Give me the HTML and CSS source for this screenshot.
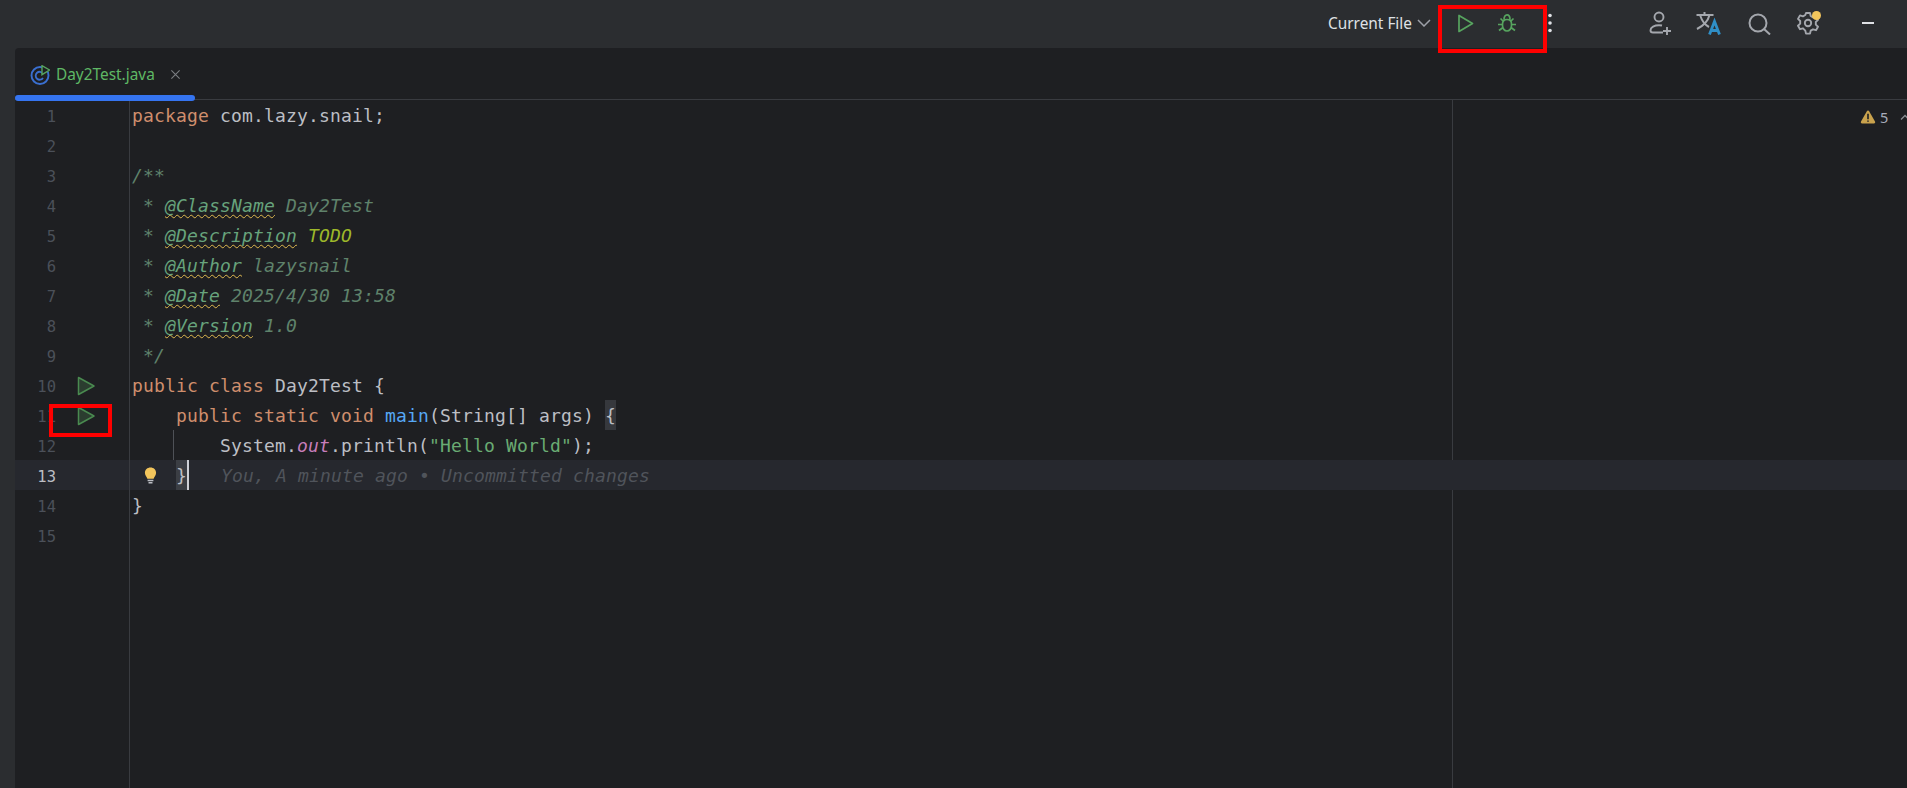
FILE: index.html
```html
<!DOCTYPE html>
<html lang="en">
<head>
<meta charset="utf-8">
<title>Day2Test.java</title>
<link rel="stylesheet" href="styles.css">
</head>
<body>
<div class="app">
  <header class="titlebar">
    <span class="config">Current File</span>
    <svg class="ic chev" viewBox="0 0 14 8"><path d="M1 1 7 7 13 1"/></svg>
    <svg class="ic tb-play" viewBox="0 0 20 20"><path d="M3 2.500v16L16.500 10.500z"/></svg>
    <svg class="ic tb-bug" viewBox="0 0 20 20"><path d="M5.500 11c0-3 2-4.500 4.500-4.500s4.500 1.500 4.500 4.500v1.500c0 3-2 5.500-4.500 5.500s-4.500-2.500-4.500-5.500zM6 8 3.500 5.500M14 8l2.500-2.500M7 6.500C7 3.500 8.500 1.800 10 1.800s3 1.700 3 4.700M1 11.500h4.500M14.500 11.500H19M2 17.500l4-3M18 17.500l-4-3"/></svg>
    <svg class="ic tb-more" viewBox="0 0 20 20"><circle cx="10" cy="2.500" r="1.800"/><circle cx="10" cy="10" r="1.800"/><circle cx="10" cy="17.500" r="1.800"/></svg>
    <svg class="ic tb-user" viewBox="0 0 24 24"><circle cx="11" cy="6" r="4.500"/><path d="M15 21.500H5c-1.500 0-2.500-1-2.500-2.300 0-3 4-5 8.500-5 1 0 2 .1 3 .3M15 20h8M19 16v8"/></svg>
    <svg class="ic tb-trans" viewBox="0 0 26 24"><path class="g" d="M.5 4h17M8.500 1v3M13.500 4C12 10 7 15 1 18M4 4c2 6 5 10 9 12"/><path class="b" d="M13.500 23.500l5-13 5 13M15.500 19.500h6"/></svg>
    <svg class="ic tb-search" viewBox="0 0 24 24"><circle cx="11" cy="12" r="8.500"/><path d="M17 18l6 5.500"/></svg>
    <span class="gear">
      <svg class="ic tb-gear" viewBox="0 0 24 24"><path d="M9 2h4l.7 3 2.300 1.300 3-.9 2 3.500-2.200 2.100v2.600l2.200 2.100-2 3.500-3-.9-2.300 1.300-.7 3H9l-.7-3L6 17.300l-3 .9-2-3.500 2.200-2.100v-2.600L1 7.900l2-3.500 3 .9 2.300-1.300z"/><circle cx="11" cy="12" r="3.200"/></svg>
      <i class="dot"></i>
    </span>
    <i class="minimize"></i>
  </header>

  <div class="main">
    <div class="strip"></div>
    <div class="pane">
      <div class="tabs">
        <div class="tab">
          <svg class="file-ic" viewBox="0 0 20 20"><circle class="ring" cx="10" cy="10.500" r="8.500"/><path class="c" d="M13 8.500a4 4 0 1 0 0 4.500"/><path class="tri" d="M12 .7v9L19.500 5z"/></svg>
          <span class="tab-name">Day2Test.java</span>
          <svg class="close" viewBox="0 0 12 12"><path d="M1.500 1.500l9 9M10.500 1.500l-9 9"/></svg>
        </div>
      </div>

      <div class="editor">
        <div class="gutter">
          <div class="g-row"><span class="num">1</span></div>
          <div class="g-row"><span class="num">2</span></div>
          <div class="g-row"><span class="num">3</span></div>
          <div class="g-row"><span class="num">4</span></div>
          <div class="g-row"><span class="num">5</span></div>
          <div class="g-row"><span class="num">6</span></div>
          <div class="g-row"><span class="num">7</span></div>
          <div class="g-row"><span class="num">8</span></div>
          <div class="g-row"><span class="num">9</span></div>
          <div class="g-row"><span class="num">10</span><svg class="g-play" viewBox="0 0 20 20"><path d="M2.500 1.500v17L18 10z"/></svg></div>
          <div class="g-row"><span class="num">11</span><svg class="g-play" viewBox="0 0 20 20"><path d="M2.500 1.500v17L18 10z"/></svg></div>
          <div class="g-row"><span class="num">12</span></div>
          <div class="g-row cur"><span class="num">13</span></div>
          <div class="g-row"><span class="num">14</span></div>
          <div class="g-row"><span class="num">15</span></div>
        </div>

        <div class="code">
          <div class="guide"></div>
          <div class="line"><span class="kw">package</span> com.lazy.snail;</div>
          <div class="line"></div>
          <div class="line"><span class="doc">/**</span></div>
          <div class="line"><span class="doc"> * <span class="tag">@ClassName</span> Day2Test</span></div>
          <div class="line"><span class="doc"> * <span class="tag">@Description</span> <span class="todo">TODO</span></span></div>
          <div class="line"><span class="doc"> * <span class="tag">@Author</span> lazysnail</span></div>
          <div class="line"><span class="doc"> * <span class="tag">@Date</span> 2025/4/30 13:58</span></div>
          <div class="line"><span class="doc"> * <span class="tag">@Version</span> 1.0</span></div>
          <div class="line"><span class="doc"> */</span></div>
          <div class="line"><span class="kw">public class</span> Day2Test {</div>
          <div class="line">    <span class="kw">public static void</span> <span class="fn">main</span>(String[] args) <span class="match">{</span></div>
          <div class="line"><i class="indent"></i>        System.<span class="field">out</span>.println(<span class="str">"Hello World"</span>);</div>
          <div class="line cur"><svg class="bulb" viewBox="0 0 14 20"><path class="bulb-top" d="M7 .5C3.400.5.800 3 .800 6.300c0 3 2 4.300 2.700 6.700h7c.7-2.400 2.700-3.700 2.700-6.700C13.200 3 10.600.5 7 .5z"/><path class="bulb-base" d="M3.800 15h6.400M4.800 17.500h4.400"/></svg>    <span class="match">}</span><i class="caret"></i>   <span class="hint">You, A minute ago • Uncommitted changes</span></div>
          <div class="line">}</div>
          <div class="line"></div>
          <div class="inspect">
            <svg class="warn" viewBox="0 0 14 13"><path d="M7 .5c.5 0 .9.300 1.200.8l5.300 9.400c.5.900 0 1.800-1 1.800h-11c-1 0-1.500-.9-1-1.800L5.800 1.300C6.100.8 6.500.5 7 .5z"/><path class="mark" d="M7 3.500v5M7 9.800v1.200"/></svg>
            <span class="count">5</span>
            <svg class="up" viewBox="0 0 10 6"><path d="M1 5.500 5 1.500 9 5.500"/></svg>
          </div>
        </div>
      </div>
    </div>
  </div>

  <div class="mark-run"></div>
  <div class="mark-gutter"></div>
</div>
</body>
</html>
```
FILE: styles.css
```css
* { box-sizing: border-box; }
html, body { margin: 0; height: 100%; overflow: hidden; background: #1e1f22; }
.app { position: relative; display: flex; flex-direction: column; height: 100vh; overflow: hidden; }

.titlebar {
  display: flex; align-items: center; justify-content: flex-end;
  height: 48px; flex: none; padding: 0 33px 2px 0;
  background: #2b2d30;
}
.config { padding-top: 2px; font: 15.400px/20px "Noto Sans", sans-serif; color: #dfe1e5; }
.ic { flex: none; fill: none; stroke-width: 1.500; }
.chev { width: 14px; height: 8px; margin-left: 5px; stroke: #9da0a8; stroke-width: 1.500; }
.tb-play { width: 20px; height: 20px; margin-left: 25px; stroke: #57a45f; stroke-width: 1.700; stroke-linejoin: round; }
.tb-bug { width: 20px; height: 20px; margin-left: 21px; stroke: #57a45f; stroke-width: 1.700; }
.tb-more { width: 20px; height: 20px; margin-left: 23px; fill: #dfe1e5; stroke: none; }
.tb-user { width: 24px; height: 24px; margin-left: 88px; stroke: #a4a7ad; stroke-width: 1.900; }
.tb-trans { width: 26px; height: 24px; margin-left: 24px; stroke-width: 2; }
.tb-trans .g { stroke: #a4a7ad; }
.tb-trans .b { stroke: #2f8fc7; stroke-width: 2.800; }
.tb-search { width: 24px; height: 24px; margin-left: 25px; stroke: #a4a7ad; stroke-width: 2; }
.gear { position: relative; display: flex; margin-left: 26px; }
.tb-gear { width: 24px; height: 24px; stroke: #a4a7ad; stroke-width: 1.900; stroke-linejoin: round; }
.dot { position: absolute; top: 0; right: 0; width: 9px; height: 9px; border-radius: 50%; background: #f2c55c; }
.minimize { flex: none; width: 12px; height: 2px; margin-left: 41px; background: #dfe1e5; }

.main { display: flex; flex: 1; min-height: 0; background: #2b2d30; }
.strip { width: 15px; flex: none; }
.pane { flex: 1; min-width: 0; display: flex; flex-direction: column; background: #1e1f22; border-top-left-radius: 4px; }

.tabs { height: 52px; flex: none; border-bottom: 1px solid #393b40; }
.tab {
  position: relative; display: flex; align-items: center;
  width: 180px; height: 52px; padding: 1px 0 0 15px;
}
.tab::after {
  content: ""; position: absolute; left: 0; right: 0; bottom: -1px; height: 6px;
  border-radius: 3px; background: #3574f0;
}
.file-ic { width: 20px; height: 20px; flex: none; fill: none; }
.ring { stroke: #3a6fd0; stroke-width: 1.900; }
.c { stroke: #3a6fd0; stroke-width: 1.800; }
.tri { fill: #1e1f22; stroke: #57a45f; stroke-width: 1.400; }
.tab-name { margin-left: 6px; font: 15.400px/20px "Noto Sans", sans-serif; color: #5fb865; }
.close { width: 11px; height: 11px; margin-left: 15px; flex: none; fill: none; stroke: #7a7d82; stroke-width: 1.200; }

.editor {
  flex: 1; min-height: 0; display: flex;
  font: 18px/32px "DejaVu Sans Mono", monospace; letter-spacing: .16px; color: #bcbec4;
}
.gutter { width: 115px; flex: none; border-right: 1px solid #393b40; }
.g-row { position: relative; display: flex; align-items: center; height: 30px; padding-top: 4px; }
.num {
  width: 41px; text-align: right; letter-spacing: 0;
  font-size: 15.500px; line-height: 20px; color: #4b5059;
}
.g-row.cur { background: #26282e; }
.g-row.cur .num { color: #bcbec4; }
.g-play { width: 20px; height: 20px; margin: -2px 0 0 20px; fill: #2b3d2f; stroke: #4a8a50; stroke-width: 1.500; stroke-linejoin: round; }

.code { position: relative; flex: 1; min-width: 0; }
.guide { position: absolute; top: 0; bottom: 0; left: 1322px; width: 1px; background: #393b40; }
.line { position: relative; height: 30px; padding-left: 2px; white-space: pre; }
.line.cur { background: #26282e; }
.bulb { position: absolute; left: 14px; top: 7px; width: 13px; height: 18px; fill: none; }
.bulb-top { fill: #f2c55c; }
.bulb-base { stroke: #bcbec4; stroke-width: 1.500; }
.kw { color: #cf8e6d; }
.doc { color: #5f826b; font-style: italic; }
.tag { color: #67a37c; text-decoration: underline wavy #e0b84f 1px; text-underline-offset: 2px; text-decoration-skip-ink: none; }
.todo { color: #9db82a; }
.fn { color: #56a8f5; }
.field { color: #c77dbb; font-style: italic; }
.str { color: #6aab73; }
.match { display: inline-block; height: 30px; background: #3b3e44; vertical-align: top; }
.line:not(.cur) .match { background: #36383d; }
.hint { margin-left: 1px; color: #50545b; font-style: italic; }
.caret { display: inline-block; width: 2px; height: 30px; margin-right: -2px; background: #ced0d6; vertical-align: top; }
.indent { position: absolute; left: 43px; top: 0; bottom: 0; width: 1px; background: #4e5157; }

.inspect { position: absolute; top: 7px; left: 1730px; display: flex; align-items: center; height: 20px; font: 14.500px/20px "Noto Sans", sans-serif; color: #a8adbd; }
.warn { width: 16px; height: 14px; fill: #c9a24d; }
.mark { stroke: #1e1f22; stroke-width: 1.500; fill: none; }
.count { margin-left: 4px; }
.up { width: 10px; height: 6px; margin-left: 12px; fill: none; stroke: #8a8d93; stroke-width: 1.300; }

.mark-run, .mark-gutter { position: absolute; border: 4px solid #ff0000; }
.mark-run { left: 1438px; top: 5px; width: 109px; height: 48px; }
.mark-gutter { left: 49px; top: 404px; width: 63px; height: 33px; }
```
